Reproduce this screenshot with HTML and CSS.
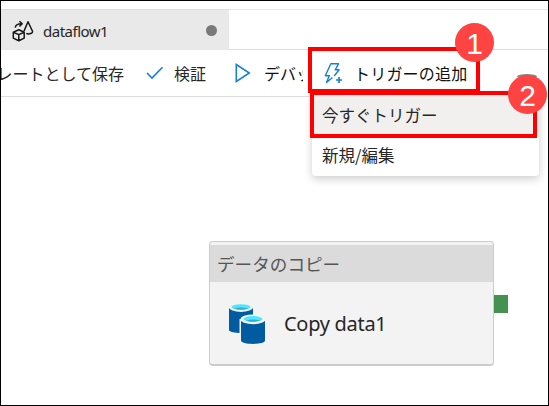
FILE: index.html
```html
<!DOCTYPE html>
<html lang="ja">
<head>
<meta charset="utf-8">
<title>dataflow1</title>
<link rel="stylesheet" href="styles.css">
</head>
<body>
<main class="frame">
  <header class="tabs">
    <div class="tab">
      <svg class="tab-icon" width="22" height="22" viewBox="0 0 22 22" fill="none" stroke="#151515" stroke-width="1.5" stroke-linejoin="round">
        <path d="M1.3 12.2 6.8 9.8l5.4 2.4v5.9l-5.4 2.6-5.5-2.6zM1.3 12.2l5.500 2.400 5.400-2.400M6.800 14.600v6"/>
        <path d="M3.200 7.700C3.700 4.800 6 3.700 9.600 3.800M7.400 1.200l2.800 2.600-2.800 2.700"/>
        <path d="M12 11.100 16 1.800l4.500 9.500c.7 2-3.400 3.200-6.200 2.200"/>
      </svg>
      <span class="tab-name">dataflow1</span>
      <span class="dirty"></span>
    </div>
    <div class="tab-rest"></div>
  </header>
  <nav class="toolbar">
    <div class="save"><span>レートとして保存</span></div>
    <svg class="check" width="18" height="14" viewBox="0 0 18 14" fill="none" stroke="#1680d8" stroke-width="1.600"><path d="M1 7l5 5L16.500 1.300"/></svg>
    <span class="validate">検証</span>
    <svg class="play" width="16" height="20" viewBox="0 0 16 20" fill="none" stroke="#1680d8" stroke-width="1.600"><path d="M1.300 1.500v17L14.300 10z"/></svg>
    <div class="debug"><span>デバッグ</span></div>
    <svg class="bolt" width="20" height="22" viewBox="0 0 20 22" fill="none" stroke="#1680d8" stroke-width="1.400" stroke-linejoin="round"><path d="M9.500 15.500 3.500 20.500 6.300 13.700H2.300L7.800 1.800h7.700l-3.300 6h3.900L11.200 14"/><path d="M13 18h6M16 15v6" stroke-width="1.700"/></svg>
    <span class="trigger">トリガーの追加</span>
  </nav>
  <section class="canvas">
    <div class="node">
      <article class="card">
        <h2>データのコピー</h2>
        <div class="card-body">
          <svg width="38" height="43" viewBox="0 0 38 43">
            <path d="M1 6v22c0 4 24 4 24 0V6z" fill="#005ba1"/>
            <ellipse cx="13" cy="5.300" rx="12" ry="4.600" fill="#f3f3f3"/><ellipse cx="13" cy="5" rx="9.500" ry="2.800" fill="#50e6ff"/><path d="M6 6.500q7-2 14 0-7 2.500-14 0" fill="#2baed2"/>
            <path d="M11.500 17v22c0 5 26.500 5 26.500 0V17z" fill="#f3f3f3"/>
            <path d="M13 18v20.500c0 4.500 24 4.500 24 0V18z" fill="#005ba1"/>
            <ellipse cx="25" cy="17.300" rx="12.500" ry="4.900" fill="#f3f3f3"/><ellipse cx="25" cy="17" rx="9.500" ry="2.900" fill="#50e6ff"/><path d="M18 18.500q7-2 14 0-7 2.500-14 0" fill="#2baed2"/>
          </svg>
          <span>Copy data1</span>
        </div>
      </article>
      <i class="port"></i>
    </div>
  </section>
  <div class="menu">
    <div class="item active">今すぐトリガー</div>
    <div class="item">新規/編集</div>
  </div>
  <div class="outline outline-one"></div>
  <div class="outline outline-two"></div>
  <div class="badge badge-one">1</div>
  <div class="badge badge-two">2</div>
</main>
</body>
</html>
```
FILE: styles.css
```css
* { box-sizing: border-box; }
body { margin: 0; background: #fff; color: #262626; }
svg { display: block; flex: none; }
.frame { position: relative; width: 549px; height: 406px; border: 1px solid #000; overflow: hidden; font: 16px/24px "Noto Sans CJK JP", sans-serif; }
.tabs { display: flex; height: 49px; padding-top: 8px; }
.tab { display: flex; align-items: center; width: 228px; padding: 0 12px 0 11px; background: #e9e9e9; border-top: 1px solid #dedede; }
.tab-icon { margin-top: 1px; }
.tab-name { margin: 1px 0 0 9px; font: 15px/22px "Noto Sans", sans-serif; letter-spacing: -.5px; }
.dirty { width: 11px; height: 11px; margin-left: auto; border-radius: 50%; background: #797979; }
.tab-rest { flex: 1; border-top: 1px solid #e6e6e6; border-bottom: 1px solid #dedede; }
.toolbar { display: flex; align-items: center; height: 47px; border-bottom: 1px solid #dcdcdc; white-space: nowrap; }
.save { display: flex; justify-content: flex-end; width: 123px; overflow: hidden; }
.save span { flex: none; }
.check { margin-left: 22px; }
.validate { margin-left: 10px; }
.play { margin-left: 29px; }
.debug { width: 39px; margin-left: 13px; overflow: hidden; color: #111; }
.bolt { margin-left: 20px; }
.trigger { margin-left: 11px; color: #111; letter-spacing: .2px; }
.canvas { padding: 144px 0 0 208px; }
.node { display: flex; align-items: center; }
.card { width: 285px; height: 125px; border: 1.5px solid #ccc; border-bottom-width: 2px; border-radius: 4px; background: #f3f3f3; padding-top: 3px; }
.card h2 { height: 37px; margin: 0; padding: 0 0 0 7px; background: #dbdbdb; color: #555; font-size: 17.600px; font-weight: 400; line-height: 38px; }
.card-body { display: flex; align-items: center; height: 83px; padding-left: 18px; }
.card-body span { margin-left: 18px; font: 20px/28px "Noto Sans", sans-serif; letter-spacing: -.3px; }
.port { width: 14px; height: 18px; background: #459150; }
.menu { position: absolute; left: 311px; top: 92px; width: 227px; height: 83px; padding-top: 2px; border-radius: 4px; background: #fff; box-shadow: 0 3px 8px #0003; }
.item { height: 40px; padding-left: 10px; font-size: 16.500px; line-height: 41px; }
.active { background: #f2f0ef; }
.outline { position: absolute; border: 4px solid #ff0000; }
.outline-one { left: 307px; top: 46px; width: 172px; height: 46px; }
.outline-two { left: 309px; top: 90px; width: 227px; height: 47px; }
.badge { position: absolute; width: 39px; height: 39px; border-radius: 50%; background: #ff4343; color: #fff; text-align: center; font: 30px/41px "Liberation Sans", sans-serif; }
.badge-one { left: 454px; top: 22px; }
.badge-two { left: 507px; top: 74px; }
.badge-two::before { content: ""; position: absolute; z-index: -1; left: 9px; top: -1px; width: 20px; height: 5px; border-radius: 50%; background: #888; }
```
